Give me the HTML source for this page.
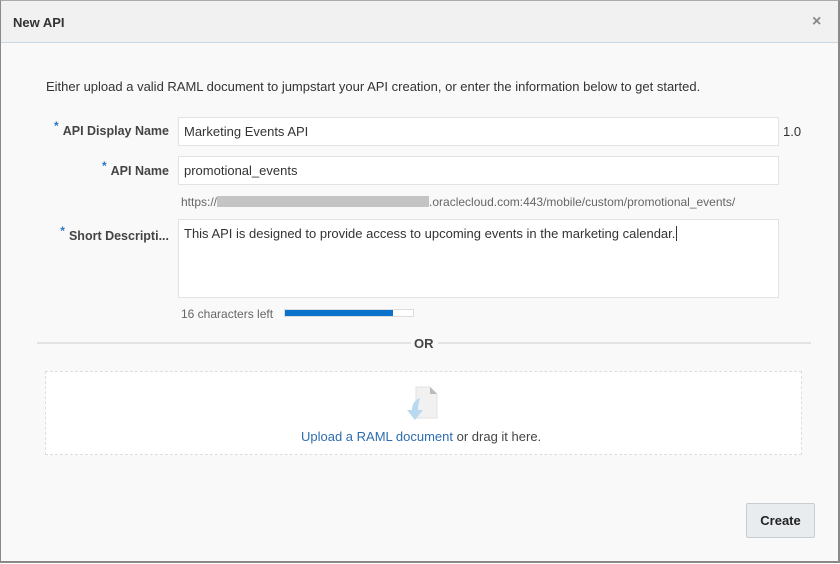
<!DOCTYPE html>
<html><head><style>
*{box-sizing:border-box;margin:0;padding:0}
body{width:840px;height:564px;background:#fff;font-family:"Liberation Sans",Arial,sans-serif;position:relative;overflow:hidden}
.dlg{position:absolute;left:0;top:0;width:840px;height:563px;border:1px solid #8a8a8a;border-right:2px solid #8a8a8a;border-bottom:2px solid #8a8a8a;border-top:1px solid #aaa;background:#f9f9f9}
.hdr{position:absolute;left:0;top:0;width:837px;height:42px;background:#f1f1f1;border-bottom:1px solid #c9d7e3}
.a{position:absolute;white-space:nowrap}
.inp{position:absolute;background:#fff;border:1px solid #e3e3e3;font-size:13px;color:#333;padding:6px 5px}
.lbl{position:absolute;right:669px;font-size:12.5px;font-weight:bold;color:#444;white-space:nowrap}
.st{color:#2a78c2;font-size:12px;position:relative;top:-5px;margin-right:4px}
</style></head><body>
<div class="dlg">
<div class="hdr"></div>
<div class="a" style="left:12px;top:14px;font-size:13px;font-weight:bold;color:#333">New API</div>
<div class="a" style="left:811px;top:12px;font-size:16px;font-weight:bold;color:#888">×</div>
<div class="a" style="left:45px;top:78px;font-size:13px;color:#333">Either upload a valid RAML document to jumpstart your API creation, or enter the information below to get started.</div>
<div class="lbl" style="top:123px"><span class="st">*</span>API Display Name</div>
<div class="inp" style="left:177px;top:116px;width:601px;height:29px">Marketing Events API</div>
<div class="a" style="left:782px;top:123px;font-size:13px;color:#333">1.0</div>
<div class="lbl" style="top:163px"><span class="st">*</span>API Name</div>
<div class="inp" style="left:177px;top:155px;width:601px;height:29px">promotional_events</div>
<div class="a" style="left:180px;top:194px;font-size:12px;color:#666">https://<span style="display:inline-block;width:212px;height:11px;background:#c4c4c4;vertical-align:-1px"></span>.oraclecloud.com:443/mobile/custom/promotional_events/</div>
<div class="lbl" style="top:228px"><span class="st">*</span>Short Descripti...</div>
<div class="inp" style="left:177px;top:218px;width:601px;height:79px">This API is designed to provide access to upcoming events in the marketing calendar.<span style="border-left:1px solid #333;margin-left:1px"></span></div>
<div class="a" style="left:180px;top:306px;font-size:12px;color:#666">16 characters left</div>
<div class="a" style="left:283px;top:308px;width:130px;height:8px;border:1px solid #ddd;background:#fff"><div style="width:108px;height:6px;background:#0b72cc"></div></div>
<div class="a" style="left:36px;top:341px;width:374px;height:2px;background:#e3e3e3"></div>
<div class="a" style="left:437px;top:341px;width:373px;height:2px;background:#e3e3e3"></div>
<div class="a" style="left:413px;top:335px;font-size:13px;font-weight:bold;color:#444">OR</div>
<div class="a" style="left:44px;top:370px;width:757px;height:84px;background:#fff;border:1px dashed #ddd"></div>
<svg class="a" style="left:403px;top:385px" width="40" height="40" viewBox="0 0 40 40">
<path d="M12 1h14l7 7v24H12z" fill="#f1f1f1" stroke="#e2e2e2"/>
<path d="M26 1v7h7z" fill="#bbb"/>
<path d="M16 12c-5 2-8 6-8 12h-5l8 10 8-10h-5c0-5 1-8 2-12z" fill="#b9d9f0"/>
</svg>
<div class="a" style="left:300px;top:428px;font-size:13px;color:#444"><span style="color:#2d6db0">Upload a RAML document</span> or drag it here.</div>
<div class="a" style="left:745px;top:502px;width:69px;height:35px;background:#e8ecef;border:1px solid #c8cdd2;border-radius:2px;font-size:13px;font-weight:bold;color:#222;text-align:center;line-height:33px">Create</div>
</div>
</body></html>
